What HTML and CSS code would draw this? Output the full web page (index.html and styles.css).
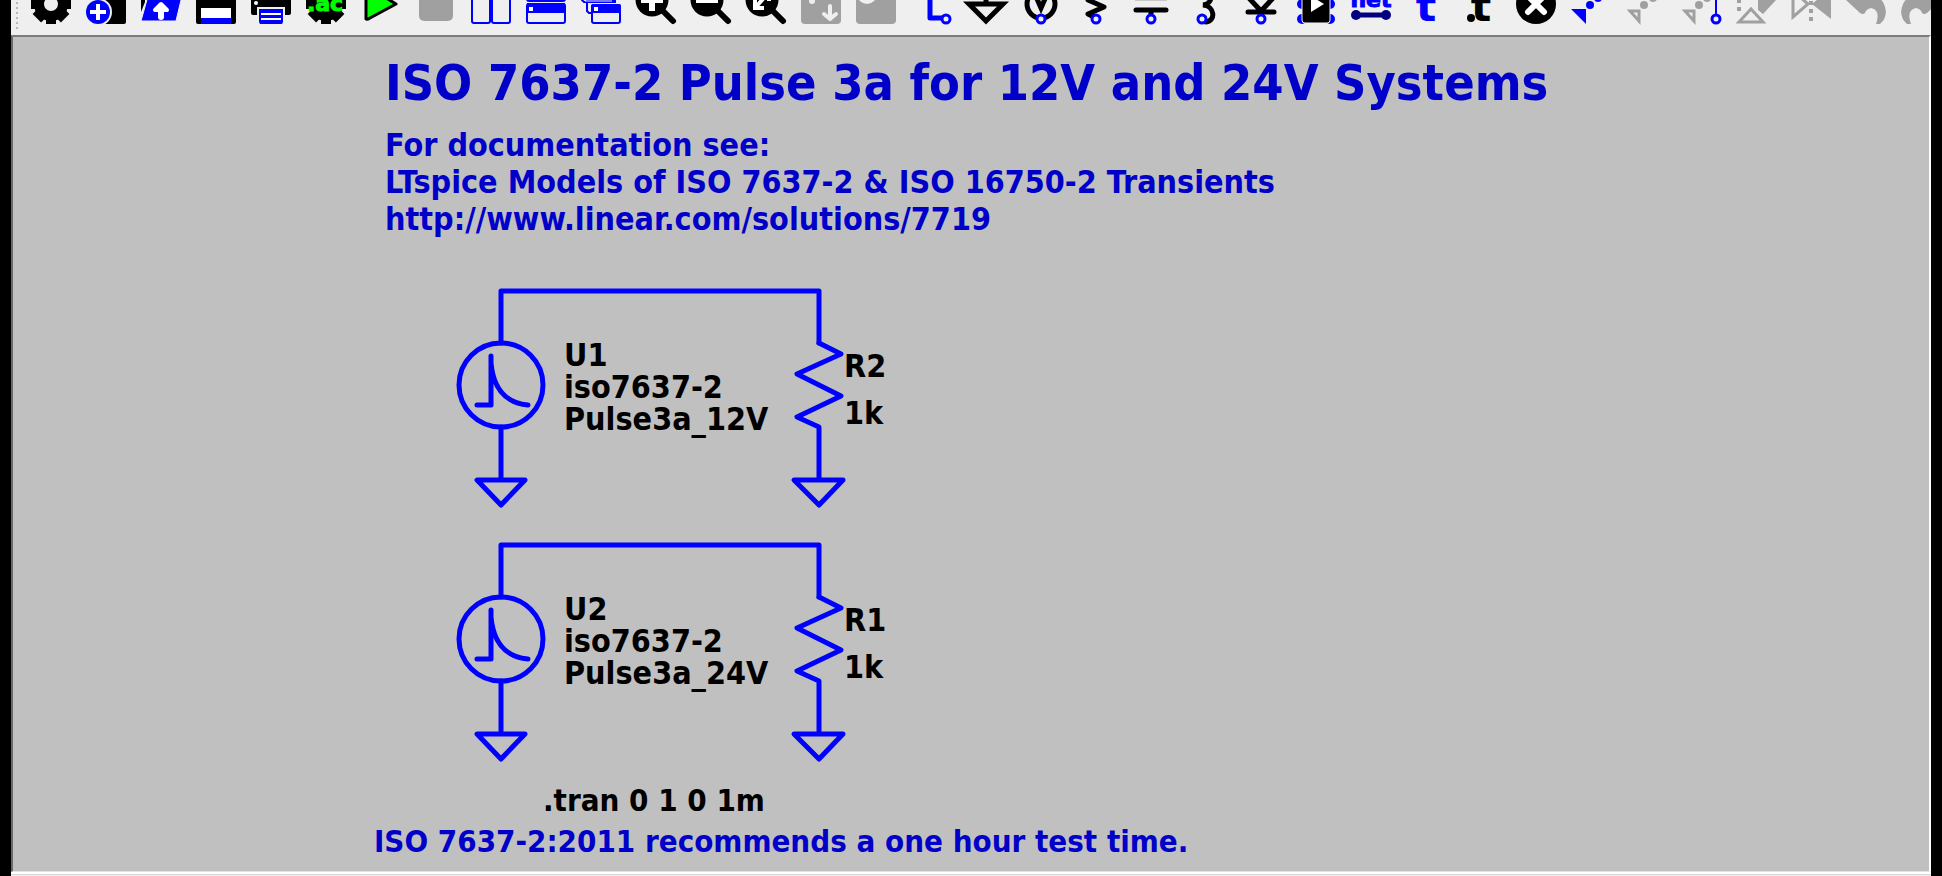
FILE: index.html
```html
<!DOCTYPE html>
<html lang="en">
<head>
<meta charset="utf-8">
<title>LTspice</title>
<link rel="stylesheet" href="styles.css">
</head>
<body>
<svg class="defs" aria-hidden="true">
  <defs>
    <g id="gear">
      <circle cx="20" cy="20" r="12" fill="none" stroke="currentColor" stroke-width="10"/>
      <g fill="currentColor">
        <rect x="15" y="0" width="10" height="8"/><rect x="15" y="32" width="10" height="8"/>
        <rect x="0" y="15" width="8" height="10"/><rect x="32" y="15" width="8" height="10"/>
        <g transform="rotate(45 20 20)">
          <rect x="14" y="0" width="12" height="8"/><rect x="14" y="32" width="12" height="8"/>
          <rect x="0" y="14" width="8" height="12"/><rect x="32" y="14" width="8" height="12"/>
        </g>
      </g>
    </g>
    <g id="lens">
      <circle cx="16" cy="16" r="16.5"/>
      <path d="M26 26L37 37" stroke="currentColor" stroke-width="6" stroke-linecap="round"/>
    </g>
    <circle id="pin" r="4" fill="#efefef" stroke="#00f" stroke-width="3"/>
    <path id="turn" d="M0 16L12 4L18 11Q36 10 39 23Q42 33 34 40H30Q35 26 25 24Q20 25 19 29Q17 31 14 29Z"/>
    <g id="circuit" class="wire">
      <path d="M62 64V12H380V64"/>
      <circle cx="62" cy="106" r="42"/>
      <path d="M38 126H52V77M52 84C54 106 64 124 89 126"/>
      <path d="M62 148V201M38 201H86L62 226Z"/>
      <path d="M380 64L402 75L358 95L402 117L358 138L380 148V201M355 201H404L380 226Z"/>
    </g>
  </defs>
</svg>
<div class="window">
  <div class="toolbar" role="toolbar" aria-label="Schematic tools">
    <span class="grip"></span>
    <button class="tool" aria-label="Settings"><svg viewBox="0 0 40 40"><use href="#gear"/></svg></button>
    <button class="tool" aria-label="New schematic"><svg viewBox="0 0 40 40"><rect x="8" width="32" height="40" rx="2"/><circle cx="12" cy="28" r="14" fill="#efefef"/><circle cx="12" cy="28" r="12" fill="#00f"/><path d="M4 28H20M12 20V36" stroke="#fff" stroke-width="4"/></svg></button>
    <button class="tool" aria-label="Open"><svg viewBox="0 0 40 40"><path d="M0 4H4V18L0 28Z"/><path d="M7 12H41L35 37H0Z" fill="#00f" stroke="#efefef" stroke-width="1"/><path d="M20 22V33" stroke="#fff" stroke-width="6" stroke-linecap="round"/><path d="M14 26L20 20L26 26Z" fill="#fff" stroke="#fff" stroke-width="4" stroke-linejoin="round"/></svg></button>
    <button class="tool" aria-label="Save"><svg viewBox="0 0 40 40"><rect width="40" height="40" rx="2"/><rect x="5" y="24" width="30" height="10" fill="#fff"/><rect x="5" y="34" width="30" height="6" fill="#00f"/></svg></button>
    <button class="tool" aria-label="Print"><svg viewBox="0 0 40 40"><rect y="8" width="40" height="23" rx="2"/><circle cx="5" cy="19" r="2" fill="#fff"/><path d="M6 23H34V40H6Z" fill="#efefef"/><path d="M8 25H32V38L31 40H9L8 38Z" fill="#00f"/><path d="M10 30H30M10 35H30" stroke="#fff" stroke-width="2"/></svg></button>
    <button class="tool" aria-label="Edit analysis"><svg viewBox="0 0 40 40"><use href="#gear"/><circle cx="20" cy="20" r="9"/><text class="icon-text ac" x="19" y="27">.ac</text></svg></button>
    <button class="tool" aria-label="Run"><svg viewBox="0 0 40 40"><path d="M5 5V35Q6 36 9 34L35 20L9 4Z" fill="#0f0" stroke="#000" stroke-width="3" stroke-linejoin="round"/></svg></button>
    <button class="tool off" aria-label="Stop"><svg viewBox="0 0 40 40"><rect x="3" y="3" width="34" height="34" rx="5"/></svg></button>
    <button class="tool blue" aria-label="Tile vertically"><svg viewBox="0 0 40 40"><g fill="none" stroke="#00f" stroke-width="2"><rect x="1" y="1" width="18" height="38" rx="2"/><rect x="21" y="1" width="18" height="38" rx="2"/></g><path d="M19 0H21V37H19Z"/></svg></button>
    <button class="tool blue" aria-label="Tile horizontally"><svg viewBox="0 0 40 40"><g fill="none" stroke="#00f" stroke-width="2"><rect x="1" y="0" width="38" height="17" rx="2"/><rect x="1" y="20" width="38" height="19" rx="2"/></g><path d="M1 19H39V29H1Z"/><rect x="3" y="23" width="4" height="4" fill="#fff"/></svg></button>
    <button class="tool blue" aria-label="Cascade"><svg viewBox="0 0 40 40"><g fill="none" stroke="#00f" stroke-width="2"><path d="M1 10V16L3 18H6M6 16V27L8 29H11"/><rect x="11" y="21" width="28" height="18" rx="2"/></g><path d="M6 10H35V19H6ZM10 22Q10 20 12 20H38Q40 20 40 22V29H10Z"/><path d="M4 17H31" stroke="#efefef"/><rect x="13" y="23" width="4" height="4" fill="#fff"/></svg></button>
    <button class="tool" aria-label="Zoom in"><svg viewBox="0 0 40 40"><use href="#lens"/><path d="M5 16H27M16 5V27" stroke="#fff" stroke-width="6"/></svg></button>
    <button class="tool" aria-label="Zoom out"><svg viewBox="0 0 40 40"><use href="#lens"/><path d="M5 16H27" stroke="#fff" stroke-width="6"/></svg></button>
    <button class="tool" aria-label="Zoom to fit"><svg viewBox="0 0 40 40"><use href="#lens"/><path d="M9 24L23 8M9 15V24H18M14 8H23V17" fill="none" stroke="#fff" stroke-width="4"/></svg></button>
    <button class="tool off" aria-label="Autorange"><svg viewBox="0 0 40 40"><rect width="40" height="40" rx="4"/><circle cx="11" cy="17" r="3" fill="#efefef"/><path d="M29 22V35M23 30L29 35L35 30" fill="none" stroke="#efefef" stroke-width="4" stroke-linecap="round" stroke-linejoin="round"/></svg></button>
    <button class="tool off" aria-label="Pick visible traces"><svg viewBox="0 0 40 40"><rect width="40" height="40" rx="4"/><circle cx="11" cy="10" r="10" fill="#efefef"/></svg></button>
    <button class="tool" aria-label="Wire"><svg viewBox="0 0 40 40"><path d="M19 0V34H31" fill="none" stroke="#00f" stroke-width="5" stroke-linejoin="round"/><use href="#pin" x="35" y="35"/></svg></button>
    <button class="tool" aria-label="Ground"><svg viewBox="0 0 40 40"><path d="M20 0V18M3 20H37L20 37Z" fill="none" stroke="#000" stroke-width="5"/></svg></button>
    <button class="tool" aria-label="Voltage source"><svg viewBox="0 0 40 40"><g fill="none" stroke="#000" stroke-width="5"><circle cx="20" cy="20" r="14"/><path d="M13 8L20 24L27 8"/></g><use href="#pin" x="20" y="35"/></svg></button>
    <button class="tool" aria-label="Resistor"><svg viewBox="0 0 40 40"><path d="M28 9L12 16L28 23L12 30L20 34" fill="none" stroke="#000" stroke-width="5" stroke-linejoin="round"/><use href="#pin" x="20" y="35"/></svg></button>
    <button class="tool" aria-label="Capacitor"><svg viewBox="0 0 40 40"><path d="M4 16H36" stroke="#a0a0a0"/><path d="M5 26H35M20 26V32" stroke="#000" stroke-width="5" stroke-linecap="round"/><use href="#pin" x="20" y="35"/></svg></button>
    <button class="tool" aria-label="Inductor"><svg viewBox="0 0 40 40"><path d="M16 4C28 4 28 20 17 21C29 22 30 37 20 38" fill="none" stroke="#000" stroke-width="5" stroke-linecap="round"/><use href="#pin" x="16" y="35"/></svg></button>
    <button class="tool" aria-label="Diode"><svg viewBox="0 0 40 40"><path d="M7 28H33M6 12L20 27L34 12M20 28V33" fill="none" stroke="#000" stroke-width="5" stroke-linecap="round"/><use href="#pin" x="20" y="35"/></svg></button>
    <button class="tool" aria-label="Component"><svg viewBox="0 0 40 40"><g fill="#00f"><circle cx="6" cy="20" r="5"/><circle cx="6" cy="35" r="5"/><circle cx="34" cy="20" r="5"/><circle cx="34" cy="35" r="5"/></g><rect x="6" y="0" width="28" height="39" rx="3" stroke="#efefef"/><path d="M15 12V28L28 20Z" fill="#fff"/></svg></button>
    <button class="tool navy" aria-label="Label net"><svg viewBox="0 0 40 40"><text class="icon-text net" x="20" y="23">net</text><path d="M5 31H35" stroke="#000080" stroke-width="5"/><circle cx="5" cy="31" r="5"/><circle cx="35" cy="31" r="5"/></svg></button>
    <button class="tool blue" aria-label="Text"><svg viewBox="0 0 40 40"><text class="icon-text letter" x="20" y="37">t</text></svg></button>
    <button class="tool" aria-label="SPICE directive"><svg viewBox="0 0 40 40"><circle cx="10" cy="34" r="4"/><text class="icon-text letter" x="20" y="37">t</text></svg></button>
    <button class="tool" aria-label="Delete"><svg viewBox="0 0 40 40"><circle cx="20" cy="20" r="20"/><path d="M12 12L28 28M28 12L12 28" stroke="#fff" stroke-width="6" stroke-linecap="round"/></svg></button>
    <button class="tool blue" aria-label="Duplicate"><svg viewBox="0 0 40 40"><path d="M0 25H15V40Z"/><circle cx="19" cy="21" r="4"/><circle cx="27" cy="14" r="4"/></svg></button>
    <button class="tool off" aria-label="Move"><svg viewBox="0 0 40 40"><path d="M4 27H13V37Z" fill="none" stroke="#a0a0a0" stroke-width="3"/><circle cx="18" cy="21" r="4"/><circle cx="27" cy="14" r="4"/></svg></button>
    <button class="tool off" aria-label="Drag"><svg viewBox="0 0 40 40"><path d="M4 27H13V37Z" fill="none" stroke="#a0a0a0" stroke-width="3"/><circle cx="18" cy="21" r="4"/><circle cx="26" cy="14" r="4"/><path d="M35 0V32" stroke="#00f" stroke-width="2"/><use href="#pin" x="35" y="35"/></svg></button>
    <button class="tool off" aria-label="Rotate"><svg viewBox="0 0 40 40"><path d="M3 38H27L15 25Z" fill="none" stroke="#a0a0a0" stroke-width="3"/><path d="M22 0V26L27 30L40 16V14Z"/><path d="M1 15H5V19H1ZM1 23H5V27H1Z"/></svg></button>
    <button class="tool off" aria-label="Mirror"><svg viewBox="0 0 40 40"><path d="M2 7V33L17 20Z" fill="none" stroke="#a0a0a0" stroke-width="3"/><path d="M40 4V35L21 20Z"/><path d="M18 17H22V21H18ZM18 25H22V29H18ZM18 33H22V37H18Z"/></svg></button>
    <button class="tool off" aria-label="Undo"><svg viewBox="0 0 40 40"><use href="#turn"/></svg></button>
    <button class="tool off" aria-label="Redo"><svg viewBox="0 0 40 40"><use href="#turn" transform="matrix(-1 0 0 1 40 0)"/></svg></button>
  </div>
  <main class="sheet">
    <h1 class="title">ISO 7637-2 Pulse 3a for 12V and 24V Systems</h1>
    <p class="docs">For documentation see:<br>LTspice Models of ISO 7637-2 &amp; ISO 16750-2 Transients<br>http://www.linear.com/solutions/7719</p>
    <div class="circuits">
      <svg class="circuit" viewBox="0 0 480 254">
        <use href="#circuit"/>
        <text x="125" y="87">U1</text><text x="125" y="119">iso7637-2</text><text x="125" y="151">Pulse3a_12V</text>
        <text x="405" y="98">R2</text><text x="405" y="145">1k</text>
      </svg>
      <svg class="circuit" viewBox="0 0 480 254">
        <use href="#circuit"/>
        <text x="125" y="87">U2</text><text x="125" y="119">iso7637-2</text><text x="125" y="151">Pulse3a_24V</text>
        <text x="405" y="98">R1</text><text x="405" y="145">1k</text>
      </svg>
    </div>
    <p class="directive">.tran 0 1 0 1m</p>
    <p class="note">ISO 7637-2:2011 recommends a one hour test time.</p>
  </main>
  <div class="status"></div>
</div>
</body>
</html>
```
FILE: styles.css
```css
* { box-sizing: border-box; }

body {
  margin: 0;
  background: #000;
  font-family: "DejaVu Sans Condensed", "DejaVu Sans", sans-serif;
  font-stretch: condensed;
  font-weight: bold;
}

.defs { position: absolute; width: 0; height: 0; }

.window {
  display: flex;
  flex-direction: column;
  height: 100vh;
  margin: 0 11px;
  background: #efefef;
  overflow: hidden;
}

.toolbar {
  display: flex;
  flex: none;
  align-items: flex-end;
  gap: 15px;
  height: 35px;
  padding: 0 0 11px 5px;
  overflow: hidden;
}

.grip {
  flex: none;
  width: 2px;
  height: 40px;
  margin: 0 -2px -8px 0;
  background: repeating-linear-gradient(#b8b8b8 0 2px, #efefef 2px 5px);
}

.tool {
  flex: none;
  width: 40px;
  height: 40px;
  padding: 0;
  border: 0;
  background: none;
  color: #000;
}

.tool svg { display: block; width: 40px; height: 40px; fill: currentColor; overflow: visible; }
.tool.off { color: #a0a0a0; }
.tool.blue { color: #00f; }
.tool.navy { color: #000080; }

.icon-text { font-family: "DejaVu Sans", sans-serif; font-weight: bold; font-stretch: normal; text-anchor: middle; }
.ac { font-size: 22px; fill: #0f0; stroke: #0f0; stroke-width: 1; }
.net { font-size: 22px; fill: #00f; stroke: #00f; stroke-width: 1; }
.letter { font-size: 43px; }

.sheet {
  display: flex;
  flex: 1;
  flex-direction: column;
  align-items: flex-start;
  min-height: 0;
  padding: 14px 0 0 361px;
  background: #c0c0c0;
  border: 2px solid #696969;
  border-top-color: #7c7c7c;
  border-right-color: #fff;
  border-bottom: 1px solid #e3e3e3;
  font-size: 32px;
  line-height: 37px;
  white-space: nowrap;
}

.title, .docs, .directive, .note { margin: 0; }
.title, .docs, .note { color: #0000c8; }
.title { padding-left: 11px; font-size: 50px; line-height: 64px; }
.docs { margin-top: 12px; padding-left: 11px; }

.circuits { display: flex; flex-direction: column; margin: 41px 0 0 65px; }
.circuit { display: block; width: 480px; height: 254px; }
.circuit text { fill: #000; font-size: 32px; }
.wire { fill: none; stroke: #00f; stroke-width: 5; stroke-linejoin: round; stroke-linecap: round; }

.directive, .note { font-size: 31px; }
.directive { margin-top: -5px; padding-left: 169px; }
.note { margin-top: 4px; }

.status {
  flex: none;
  height: 4px;
  border-top: 2px solid #fff;
  box-shadow: inset 0 1px #d8d8d8;
}
```
